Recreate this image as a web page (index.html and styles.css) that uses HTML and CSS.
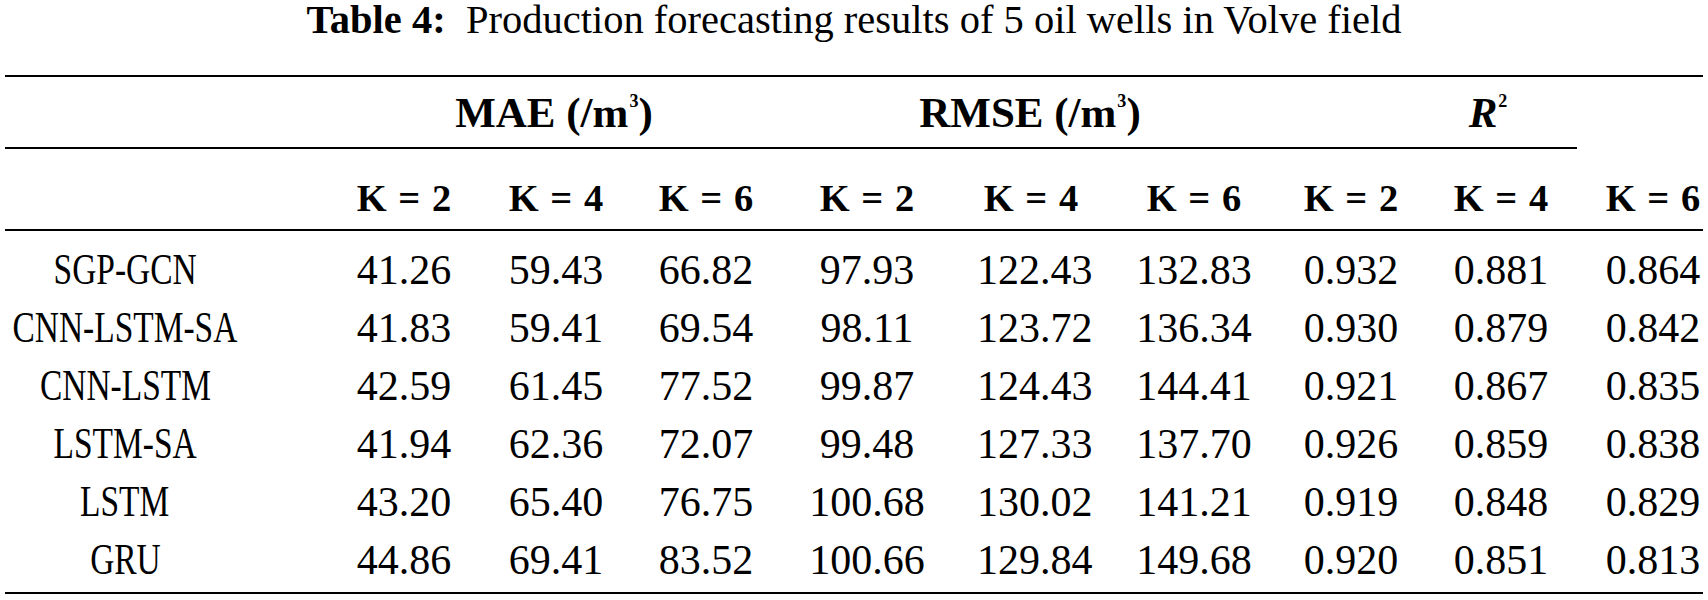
FILE: index.html
```html
<!DOCTYPE html>
<html lang="en">
<head>
<meta charset="utf-8">
<title>Table 4</title>
<link rel="stylesheet" href="styles.css">
</head>
<body>
<div class="page">
  <p class="caption"><b>Table 4:</b>&nbsp; Production forecasting results of 5 oil wells in Volve field</p>
  <div class="table">
    <div class="row head1">
      <div class="cell label"></div>
      <div class="cell group mae">MAE (/m<sup>3</sup>)</div>
      <div class="cell group rmse">RMSE (/m<sup>3</sup>)</div>
      <div class="cell group r2"><i>R</i><sup>2</sup></div>
    </div>
    <div class="row head2">
      <div class="cell label"></div>
      <div class="cell">K = 2</div>
      <div class="cell">K = 4</div>
      <div class="cell">K = 6</div>
      <div class="cell">K = 2</div>
      <div class="cell">K = 4</div>
      <div class="cell">K = 6</div>
      <div class="cell">K = 2</div>
      <div class="cell">K = 4</div>
      <div class="cell">K = 6</div>
    </div>
    <div class="body">
      <div class="row data">
        <div class="cell label"><span class="name">SGP-GCN</span></div>
        <div class="cell">41.26</div><div class="cell">59.43</div><div class="cell">66.82</div>
        <div class="cell">97.93</div><div class="cell">122.43</div><div class="cell">132.83</div>
        <div class="cell">0.932</div><div class="cell">0.881</div><div class="cell">0.864</div>
      </div>
      <div class="row data">
        <div class="cell label"><span class="name">CNN-LSTM-SA</span></div>
        <div class="cell">41.83</div><div class="cell">59.41</div><div class="cell">69.54</div>
        <div class="cell">98.11</div><div class="cell">123.72</div><div class="cell">136.34</div>
        <div class="cell">0.930</div><div class="cell">0.879</div><div class="cell">0.842</div>
      </div>
      <div class="row data">
        <div class="cell label"><span class="name">CNN-LSTM</span></div>
        <div class="cell">42.59</div><div class="cell">61.45</div><div class="cell">77.52</div>
        <div class="cell">99.87</div><div class="cell">124.43</div><div class="cell">144.41</div>
        <div class="cell">0.921</div><div class="cell">0.867</div><div class="cell">0.835</div>
      </div>
      <div class="row data">
        <div class="cell label"><span class="name">LSTM-SA</span></div>
        <div class="cell">41.94</div><div class="cell">62.36</div><div class="cell">72.07</div>
        <div class="cell">99.48</div><div class="cell">127.33</div><div class="cell">137.70</div>
        <div class="cell">0.926</div><div class="cell">0.859</div><div class="cell">0.838</div>
      </div>
      <div class="row data">
        <div class="cell label"><span class="name">LSTM</span></div>
        <div class="cell">43.20</div><div class="cell">65.40</div><div class="cell">76.75</div>
        <div class="cell">100.68</div><div class="cell">130.02</div><div class="cell">141.21</div>
        <div class="cell">0.919</div><div class="cell">0.848</div><div class="cell">0.829</div>
      </div>
      <div class="row data">
        <div class="cell label"><span class="name">GRU</span></div>
        <div class="cell">44.86</div><div class="cell">69.41</div><div class="cell">83.52</div>
        <div class="cell">100.66</div><div class="cell">129.84</div><div class="cell">149.68</div>
        <div class="cell">0.920</div><div class="cell">0.851</div><div class="cell">0.813</div>
      </div>
    </div>
  </div>
</div>
</body>
</html>
```

FILE: styles.css
```css
html, body {
  margin: 0;
  padding: 0;
  background: #ffffff;
}

body {
  font-family: "Liberation Serif", "Times New Roman", serif;
  color: #000000;
}

.page {
  width: 1708px;
}

.caption {
  margin: 0 0 35px 0;
  font-size: 40.5px;
  line-height: 40px;
  text-align: center;
  white-space: nowrap;
}

.caption b {
  font-weight: 700;
}

.table {
  margin-left: 5px;
  width: 1698px;
  border-top: 2px solid #000;
  border-bottom: 2px solid #000;
}

.row {
  display: grid;
  grid-template-columns: 346px 106px 198px 102px 220px 108px 218px 96px 204px 100px;
}

.cell {
  text-align: center;
  white-space: nowrap;
}

.label {
  padding-right: 106px;
}

/* first header line */
.head1 .cell {
  font-size: 43px;
  font-weight: 700;
  line-height: 44px;
  padding-top: 14px;
  padding-bottom: 12px;
  border-bottom: 2px solid #000;
}

.head1 .mae {
  grid-column: 2 / 5;
}

.head1 .rmse {
  grid-column: 5 / 8;
}

.head1 .r2 {
  grid-column: 8 / 11;
  margin-right: 126px;
  padding-left: 96px;
}

.head1 i {
  font-style: italic;
}

.head1 sup {
  font-size: 0.42em;
  line-height: 0;
  vertical-align: 1.1em;
  margin-left: 1px;
}

/* second header line */
.head2 {
  border-bottom: 2px solid #000;
}

.head2 .cell {
  font-size: 38.5px;
  font-weight: 700;
  line-height: 40px;
  padding-top: 29px;
  padding-bottom: 11px;
  word-spacing: 2px;
}

/* body */
.body {
  padding-top: 10px;
  padding-bottom: 3px;
}

.data .cell {
  font-size: 42px;
  line-height: 58px;
  height: 58px;
}

.data .label {
  display: flex;
  justify-content: center;
  font-size: 44px;
}

.name {
  display: inline-block;
  transform: scaleX(0.76);
  transform-origin: center;
}
```
